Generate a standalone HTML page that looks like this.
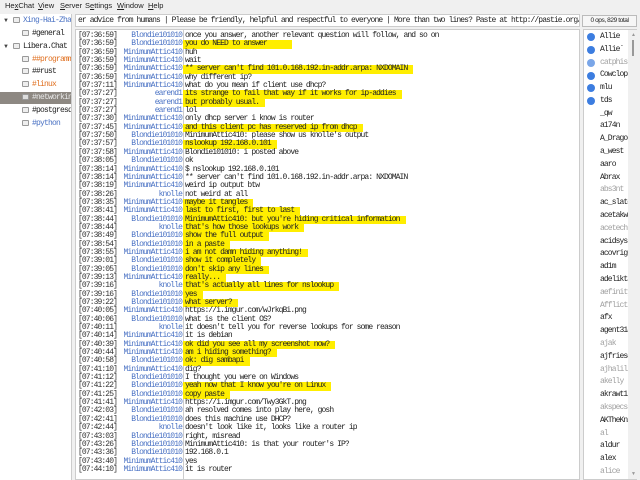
<!DOCTYPE html>
<html><head><meta charset="utf-8">
<style>
*{margin:0;padding:0;box-sizing:border-box}
body{width:640px;height:480px;overflow:hidden;background:#f0f0f0;position:relative;font-family:"Liberation Sans",sans-serif}
.menu{position:absolute;top:1px;font-size:7.5px;color:#222}
.tree{position:absolute;left:0;top:14px;width:72px;height:466px;background:#fff;border-right:1px solid #ccc;overflow:hidden}
.ti{position:absolute;font-family:"Liberation Mono",monospace;font-size:8px;letter-spacing:-0.8px;white-space:nowrap;height:12px;line-height:12px}
.ic{display:inline-block;width:7px;height:6px;border:1px solid #999;border-radius:1px;margin-right:3px;vertical-align:-1px;background:#eee}
.arr{position:absolute;font-size:6px;color:#444}
.topic{position:absolute;left:75px;top:14px;width:505px;height:13px;background:#fff;border:1px solid #ccc;font-family:"Liberation Mono",monospace;font-size:8px;letter-spacing:-0.9px;line-height:11px;padding-left:2px;white-space:nowrap;overflow:hidden;color:#222}
.ops{position:absolute;left:582px;top:15px;width:55px;height:12px;border:1px solid #bbb;background:#f6f6f6;font-size:6.5px;letter-spacing:-0.4px;text-align:center;line-height:10px;color:#222}
.chat{position:absolute;left:75px;top:29px;width:505px;height:451px;background:#fff;border:1px solid #ccc;overflow:hidden}
.sep{position:absolute;left:107px;top:0;width:1px;height:451px;background:#ccc}
.rows{position:absolute;left:0;top:2px;width:505px;font-family:"Liberation Mono",monospace;font-size:8px;letter-spacing:-0.9px;white-space:nowrap}
.r{position:relative;height:8.35px;line-height:8.35px}
.t{position:absolute;left:2px;color:#333}
.n{position:absolute;right:399px;color:#4a72c4}
.m{position:absolute;left:109px;color:#222}
.h{background:#ffee00;padding-right:6px;margin-left:-2px;padding-left:2px}
.ul{position:absolute;left:583px;top:29px;width:54px;height:451px;background:#fff;border:1px solid #ccc;overflow:hidden}
.u{position:absolute;left:16px;font-family:"Liberation Mono",monospace;font-size:8px;letter-spacing:-0.9px;color:#222;white-space:nowrap}
.g{color:#a0a0a0}
.dot{position:absolute;left:3px;width:8px;height:8px;border-radius:50%;background:#3c7de0}
.sb{position:absolute;left:628px;top:30px;width:9px;height:449px;background:#f0f0f0}
</style></head><body>
<div class="menu" style="left:5px">He<u>x</u>Chat</div>
<div class="menu" style="left:38px"><u>V</u>iew</div>
<div class="menu" style="left:60px"><u>S</u>erver</div>
<div class="menu" style="left:85px">S<u>e</u>ttings</div>
<div class="menu" style="left:117px"><u>W</u>indow</div>
<div class="menu" style="left:148px"><u>H</u>elp</div>

<div class="tree">
<div class="arr" style="left:3px;top:4px">▼</div>
<div class="ti" style="left:13px;top:1px;color:#4a72c4"><span class="ic"></span>Xing-Hai-Zhan</div>
<div class="ti" style="left:22px;top:14px;color:#222"><span class="ic"></span>#general</div>
<div class="arr" style="left:3px;top:30px">▼</div>
<div class="ti" style="left:13px;top:27px;color:#222"><span class="ic"></span>Libera.Chat</div>
<div class="ti" style="left:22px;top:40px;color:#e07020"><span class="ic"></span>##programming</div>
<div class="ti" style="left:22px;top:52px;color:#222"><span class="ic"></span>##rust</div>
<div class="ti" style="left:22px;top:65px;color:#e07020"><span class="ic"></span>#linux</div>
<div style="position:absolute;left:0;top:78px;width:72px;height:12px;background:#8d8882"></div>
<div class="ti" style="left:22px;top:78px;color:#e8e8e8"><span class="ic" style="background:#ddd"></span>#networking</div>
<div class="ti" style="left:22px;top:91px;color:#222"><span class="ic"></span>#postgresql</div>
<div class="ti" style="left:22px;top:104px;color:#4a72c4"><span class="ic"></span>#python</div>
</div>

<div class="topic">er advice from humans | Please be friendly, helpful and respectful to everyone | More than two lines? Paste at http://pastie.org/</div>
<div class="ops">0 ops, 829 total</div>

<div class="chat">
<div class="sep"></div>
<div class="rows">
<div class="r"><span class="t">[07:36:59]</span><span class="n">Blondie101010</span><span class="m">once you answer, another relevant question will follow, and so on</span></div>
<div class="r"><span class="t">[07:36:59]</span><span class="n">Blondie101010</span><span class="m h">you do NEED to answer&nbsp;&nbsp;&nbsp;&nbsp;&nbsp;</span></div>
<div class="r"><span class="t">[07:36:59]</span><span class="n">MinimumAttic410</span><span class="m">huh</span></div>
<div class="r"><span class="t">[07:36:59]</span><span class="n">MinimumAttic410</span><span class="m">wait</span></div>
<div class="r"><span class="t">[07:36:59]</span><span class="n">MinimumAttic410</span><span class="m h">** server can't find 101.0.168.192.in-addr.arpa: NXDOMAIN</span></div>
<div class="r"><span class="t">[07:36:59]</span><span class="n">MinimumAttic410</span><span class="m">why different ip?</span></div>
<div class="r"><span class="t">[07:37:11]</span><span class="n">MinimumAttic410</span><span class="m">what do you mean if client use dhcp?</span></div>
<div class="r"><span class="t">[07:37:27]</span><span class="n">earend1</span><span class="m h">its strange to fail that way if it works for ip-addies</span></div>
<div class="r"><span class="t">[07:37:27]</span><span class="n">earend1</span><span class="m h">but probably usual.</span></div>
<div class="r"><span class="t">[07:37:27]</span><span class="n">earend1</span><span class="m">lol</span></div>
<div class="r"><span class="t">[07:37:30]</span><span class="n">MinimumAttic410</span><span class="m">only dhcp server i know is router</span></div>
<div class="r"><span class="t">[07:37:45]</span><span class="n">MinimumAttic410</span><span class="m h">and this client pc has reserved ip from dhcp</span></div>
<div class="r"><span class="t">[07:37:50]</span><span class="n">Blondie101010</span><span class="m">MinimumAttic410:  please show us knolle's output</span></div>
<div class="r"><span class="t">[07:37:57]</span><span class="n">Blondie101010</span><span class="m h">nslookup 192.168.0.101</span></div>
<div class="r"><span class="t">[07:37:58]</span><span class="n">MinimumAttic410</span><span class="m">Blondie101010: i posted above</span></div>
<div class="r"><span class="t">[07:38:05]</span><span class="n">Blondie101010</span><span class="m">ok</span></div>
<div class="r"><span class="t">[07:38:14]</span><span class="n">MinimumAttic410</span><span class="m">$ nslookup 192.168.0.101</span></div>
<div class="r"><span class="t">[07:38:14]</span><span class="n">MinimumAttic410</span><span class="m">** server can't find 101.0.168.192.in-addr.arpa: NXDOMAIN</span></div>
<div class="r"><span class="t">[07:38:19]</span><span class="n">MinimumAttic410</span><span class="m">weird ip output btw</span></div>
<div class="r"><span class="t">[07:38:26]</span><span class="n">knolle</span><span class="m">not weird at all</span></div>
<div class="r"><span class="t">[07:38:35]</span><span class="n">MinimumAttic410</span><span class="m h">maybe it tangles</span></div>
<div class="r"><span class="t">[07:38:41]</span><span class="n">MinimumAttic410</span><span class="m h">last to first, first to last</span></div>
<div class="r"><span class="t">[07:38:44]</span><span class="n">Blondie101010</span><span class="m h">MinimumAttic410:  but you're hiding critical information</span></div>
<div class="r"><span class="t">[07:38:44]</span><span class="n">knolle</span><span class="m h">that's how those lookups work</span></div>
<div class="r"><span class="t">[07:38:49]</span><span class="n">Blondie101010</span><span class="m h">show the full output</span></div>
<div class="r"><span class="t">[07:38:54]</span><span class="n">Blondie101010</span><span class="m h">in a paste</span></div>
<div class="r"><span class="t">[07:38:55]</span><span class="n">MinimumAttic410</span><span class="m h">i am not damn hiding anything!</span></div>
<div class="r"><span class="t">[07:39:01]</span><span class="n">Blondie101010</span><span class="m h">show it completely</span></div>
<div class="r"><span class="t">[07:39:05]</span><span class="n">Blondie101010</span><span class="m h">don't skip any lines</span></div>
<div class="r"><span class="t">[07:39:13]</span><span class="n">MinimumAttic410</span><span class="m h">really...</span></div>
<div class="r"><span class="t">[07:39:16]</span><span class="n">knolle</span><span class="m h">that's actually all lines for nslookup</span></div>
<div class="r"><span class="t">[07:39:16]</span><span class="n">Blondie101010</span><span class="m h">yes</span></div>
<div class="r"><span class="t">[07:39:22]</span><span class="n">Blondie101010</span><span class="m h">what server?</span></div>
<div class="r"><span class="t">[07:40:05]</span><span class="n">MinimumAttic410</span><span class="m">https://i.imgur.com/wJrkqBi.png</span></div>
<div class="r"><span class="t">[07:40:06]</span><span class="n">Blondie101010</span><span class="m">what is the client OS?</span></div>
<div class="r"><span class="t">[07:40:11]</span><span class="n">knolle</span><span class="m">it doesn't tell you for reverse lookups for some reason</span></div>
<div class="r"><span class="t">[07:40:14]</span><span class="n">MinimumAttic410</span><span class="m">it is debian</span></div>
<div class="r"><span class="t">[07:40:39]</span><span class="n">MinimumAttic410</span><span class="m h">ok did you see all my screenshot now?</span></div>
<div class="r"><span class="t">[07:40:44]</span><span class="n">MinimumAttic410</span><span class="m h">am i hiding something?</span></div>
<div class="r"><span class="t">[07:40:58]</span><span class="n">Blondie101010</span><span class="m h">ok: dig sambapi</span></div>
<div class="r"><span class="t">[07:41:10]</span><span class="n">MinimumAttic410</span><span class="m">dig?</span></div>
<div class="r"><span class="t">[07:41:12]</span><span class="n">Blondie101010</span><span class="m">I thought you were on Windows</span></div>
<div class="r"><span class="t">[07:41:22]</span><span class="n">Blondie101010</span><span class="m h">yeah now that I know you're on Linux</span></div>
<div class="r"><span class="t">[07:41:25]</span><span class="n">Blondie101010</span><span class="m h">copy paste</span></div>
<div class="r"><span class="t">[07:41:41]</span><span class="n">MinimumAttic410</span><span class="m">https://i.imgur.com/Twy3GkT.png</span></div>
<div class="r"><span class="t">[07:42:03]</span><span class="n">Blondie101010</span><span class="m">ah resolved comes into play here, gosh</span></div>
<div class="r"><span class="t">[07:42:41]</span><span class="n">Blondie101010</span><span class="m">does this machine use DHCP?</span></div>
<div class="r"><span class="t">[07:42:44]</span><span class="n">knolle</span><span class="m">doesn't look like it, looks like a router ip</span></div>
<div class="r"><span class="t">[07:43:03]</span><span class="n">Blondie101010</span><span class="m">right, misread</span></div>
<div class="r"><span class="t">[07:43:26]</span><span class="n">Blondie101010</span><span class="m">MinimumAttic410:  is that your router's IP?</span></div>
<div class="r"><span class="t">[07:43:36]</span><span class="n">Blondie101010</span><span class="m">192.168.0.1</span></div>
<div class="r"><span class="t">[07:43:40]</span><span class="n">MinimumAttic410</span><span class="m">yes</span></div>
<div class="r"><span class="t">[07:44:10]</span><span class="n">MinimumAttic410</span><span class="m">it is router</span></div>
</div>
</div>

<div class="ul">
<div class="dot" style="top:3px"></div><div class="u" style="top:2px">Allie</div>
<div class="dot" style="top:16px"></div><div class="u" style="top:15px">Allie`</div>
<div class="dot" style="top:29px;background:#7aa6e8"></div><div class="u g" style="top:28px">catphish</div>
<div class="dot" style="top:42px"></div><div class="u" style="top:40px">Cowclops</div>
<div class="dot" style="top:54px"></div><div class="u" style="top:53px">mlu</div>
<div class="dot" style="top:67px"></div><div class="u" style="top:66px">tds</div>
<div class="u" style="top:79px">_qw</div>
<div class="u" style="top:91px">a174n</div>
<div class="u" style="top:104px">A_Dragon</div>
<div class="u" style="top:117px">a_west</div>
<div class="u" style="top:130px">aaro</div>
<div class="u" style="top:143px">Abrax</div>
<div class="u g" style="top:155px">abs3nt</div>
<div class="u" style="top:168px">ac_slate</div>
<div class="u" style="top:181px">acetakwa</div>
<div class="u g" style="top:194px">acetech</div>
<div class="u" style="top:207px">acidsys</div>
<div class="u" style="top:219px">acovrig6</div>
<div class="u" style="top:232px">ad1m</div>
<div class="u" style="top:245px">adelikta</div>
<div class="u g" style="top:258px">aefinity</div>
<div class="u g" style="top:271px">Afflicti</div>
<div class="u" style="top:283px">afx</div>
<div class="u" style="top:296px">agent314</div>
<div class="u g" style="top:309px">ajak</div>
<div class="u" style="top:322px">ajfriese</div>
<div class="u g" style="top:335px">ajhalili</div>
<div class="u g" style="top:347px">akelly</div>
<div class="u" style="top:360px">akrawt1</div>
<div class="u g" style="top:373px">akspecs</div>
<div class="u" style="top:386px">AKTheKni</div>
<div class="u g" style="top:399px">al</div>
<div class="u" style="top:411px">aldur</div>
<div class="u" style="top:424px">alex</div>
<div class="u g" style="top:437px">alice</div>
</div>
<div class="sb">
<div style="position:absolute;left:3px;top:2px;font-size:5px;color:#999">▲</div>
<div style="position:absolute;left:4px;top:10px;width:2px;height:16px;background:#999"></div>
<div style="position:absolute;left:3px;top:441px;font-size:5px;color:#999">▼</div>
</div>
</body></html>
